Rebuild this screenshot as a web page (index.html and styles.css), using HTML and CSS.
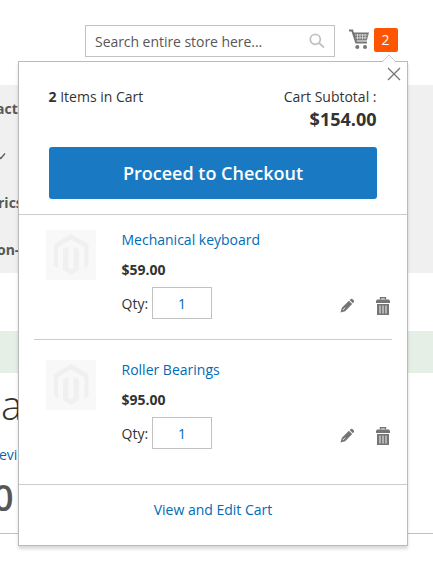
FILE: index.html
```html
<!DOCTYPE html>
<html lang="en">
<head>
<meta charset="utf-8">
<title>Cart</title>
<link rel="stylesheet" href="styles.css">
</head>
<body>
<svg width="0" height="0" class="defs" aria-hidden="true">
  <symbol id="logo" viewBox="0 0 50 50">
    <path d="M25 4 42.500 14V36L38.500 38.500V17.500L25 9.500 12 17.500V38.500L8 36V14Z"/>
    <path d="M17 19.500 22.500 16.500V38L25 39.500 27.500 38V16.500L33 19.500V40L25 45 17 40Z"/>
  </symbol>
  <symbol id="pencil" viewBox="0 0 16 16">
    <path d="M.5 15.500 2 10.500 9.500 3 13 6.500 5.500 14ZM10.300 2.200 11.500 1Q12.500.3 13.500 1.200L14.600 2.400Q15.500 3.500 14.700 4.500L13.700 5.600Z"/>
    <path d="M3 12.800 5.500 10.300" class="cut"/>
  </symbol>
  <symbol id="trash" viewBox="0 0 14 18">
    <path d="M4.500 2.500V.7H9.500V2.500" class="line"/>
    <path d="M1 2.500H13L14 4V6H0V4ZM1 7H13V18H1Z"/>
    <path d="M4 8.500V16.500M7 8.500V16.500M10 8.500V16.500" class="cut"/>
  </symbol>
</svg>
<header class="header">
  <div class="search">
    <span>Search entire store here...</span>
    <svg class="lens" viewBox="0 0 16 16"><circle cx="6.300" cy="6.300" r="5"/><path d="M10 10 15 14.500"/></svg>
  </div>
  <div class="cart-link">
    <svg class="cart" viewBox="0 0 20 20">
      <path class="frame" d="M0 1.500H3.200L7.200 13.500H18"/>
      <path d="M3.500 3.500H20L17.800 11.500H6.200Z"/>
      <path class="mesh" d="M6 6H18.500M6.500 8.800H18M8.500 5V10.500M11 5V10.500M13.500 5V10.500M16 5V10.500"/>
      <circle cx="8.300" cy="18" r="2"/><circle cx="16" cy="18" r="2"/>
    </svg>
    <span class="count">2</span>
  </div>
</header>
<nav class="nav">
  <span class="n1">actu</span>
  <svg class="check" viewBox="0 0 6 8"><path d="M-1 4.500 .8 6.500 5 1.500"/></svg>
  <span class="n2">rics</span>
  <span class="n3">on-</span>
</nav>
<main class="product">
  <div class="notice"></div>
  <h1>a</h1>
  <a class="reviews">evi</a>
  <div class="amount">0</div>
</main>

<section class="minicart">
  <svg class="pointer" viewBox="0 0 14 8"><path d="M1 7.500 7 1.500 13 7.500V8H1Z" class="fill"/><path d="M1 7 7 1 13 7"/></svg>
  <svg class="close" viewBox="0 0 14 14"><path d="M1 1 13 13M13 1 1 13"/></svg>
  <div class="summary">
    <div><b>2</b> Items in Cart</div>
    <div class="subtotal">Cart Subtotal :<strong>$154.00</strong></div>
  </div>
  <button class="checkout">Proceed to Checkout</button>
  <div class="items">
    <article class="item">
      <div class="photo"><svg><use href="#logo"/></svg></div>
      <div class="details">
        <a>Mechanical keyboard</a>
        <b>$59.00</b>
        <div class="row"><span class="label">Qty:</span><span class="qty">1</span>
          <svg class="pencil"><use href="#pencil"/></svg><svg class="trash"><use href="#trash"/></svg></div>
      </div>
    </article>
    <article class="item">
      <div class="photo"><svg><use href="#logo"/></svg></div>
      <div class="details">
        <a>Roller Bearings</a>
        <b>$95.00</b>
        <div class="row"><span class="label">Qty:</span><span class="qty">1</span>
          <svg class="pencil"><use href="#pencil"/></svg><svg class="trash"><use href="#trash"/></svg></div>
      </div>
    </article>
  </div>
  <div class="footer"><a>View and Edit Cart</a></div>
</section>
</body>
</html>
```

FILE: styles.css
```css
* { box-sizing: border-box; }
body {
  margin: 0;
  height: 566px;
  overflow: hidden;
  position: relative;
  background: #fff;
  color: #333;
  font: 14px/20px "Open Sans", sans-serif;
}
.defs { position: absolute; }
svg { display: block; fill: #757575; flex: none; }
a { color: #006bb4; }

.header { display: flex; height: 85px; padding: 25px 0 0 85px; }
.search {
  display: flex;
  justify-content: space-between;
  align-items: center;
  width: 250px;
  height: 32px;
  padding: 1px 9px 0;
  border: 1px solid #c2c2c2;
  color: #575757;
  letter-spacing: -.05px;
}
.lens { width: 16px; height: 16px; fill: none; stroke: #c2c2c2; stroke-width: 1.8; margin: -1px 0 0; }
.cart-link { display: flex; padding: 3px 0 0 14px; gap: 5px; }
.cart { width: 20px; height: 20px; margin-top: 1px; }
.cart .frame { fill: none; stroke: #757575; stroke-width: 2; }
.cart .mesh { stroke: #fff; stroke-width: .6; }
.count { width: 24px; height: 24px; border-radius: 2px; background: #ff5501; color: #fff; line-height: 24px; text-align: center; padding-right: 1px; }

.nav { display: flex; flex-direction: column; height: 188px; padding-top: 14px; background: #f0f0f0; color: #575757; font-weight: 700; }
.n1 { margin-left: -4px; }
.n2 { margin: 33px 0 0 -2px; }
.n3 { margin: 27px 0 0 -3px; }
.check { width: 6px; height: 8px; margin-top: 33px; fill: none; stroke: #575757; stroke-width: 1.2; }

.product { padding-top: 58px; }
.notice { height: 42px; background: #e5efe5; }
h1 { margin: 10px 0 0 1px; font-size: 40px; line-height: 44px; font-weight: 300; }
.reviews { display: block; margin-top: 18px; margin-left: -1px; }
.amount { height: 69px; margin-left: -7px; border-bottom: 1px solid #c1c1c1; color: #575757; font-size: 36px; line-height: 66px; font-weight: 600; }

.minicart {
  position: absolute;
  left: 18px;
  top: 61px;
  width: 390px;
  height: 485px;
  border: 1px solid #bbb;
  background: #fff;
  box-shadow: 0 3px 3px rgba(0,0,0,.15);
}
.pointer { position: absolute; left: 363px; top: -8px; width: 14px; height: 8px; fill: none; stroke: #ccc; }
.pointer .fill { fill: #fff; stroke: none; }
.close { position: absolute; left: 368px; top: 5px; width: 14px; height: 14px; stroke: #757575; stroke-width: 1.3; }
.summary { display: flex; justify-content: space-between; height: 85px; padding: 25px 30.5px 0 29.5px; }
.subtotal { text-align: right; }
.subtotal strong { display: block; font-size: 18px; line-height: 25px; }
.checkout {
  display: block;
  width: 328px;
  height: 52px;
  margin: 0 0 15px 30px;
  padding: 0;
  border: 0;
  border-radius: 3px;
  background: #1979c3;
  color: #fff;
  font: 600 18px/52px "Open Sans", sans-serif;
}
.items { height: 271px; padding: 0 15px; border: solid #ccc; border-width: 1px 0; }
.item { display: flex; height: 124px; padding: 15px 0 0 12px; }
.item + .item { height: 145px; padding-top: 20px; border-top: 1px solid #ccc; }
.photo { width: 50px; height: 50px; background: #f8f8f8; }
.photo svg { width: 50px; height: 50px; fill: #f0f0f0; }
.details { flex: 1; padding-left: 25.5px; }
.details a, .details b { display: block; }
.details b { margin: 10px 0 7px; }
.row { display: flex; align-items: center; height: 32px; }
.label { padding-top: 2px; }
.qty { width: 60px; height: 32px; margin-left: 4px; border: 1px solid #c2c2c2; color: #006bb4; line-height: 32px; text-align: center; }
.pencil { width: 15px; height: 15px; margin: 5px 21px 0 auto; }
.pencil use { width: 15px; }
.trash { width: 14px; height: 18px; margin: 6px 2px 0 0; }
.cut { fill: none; stroke: #fff; stroke-width: .9; }
.line { fill: none; stroke: #757575; stroke-width: 1.4; }
.footer { padding-top: 15px; text-align: center; }
```
